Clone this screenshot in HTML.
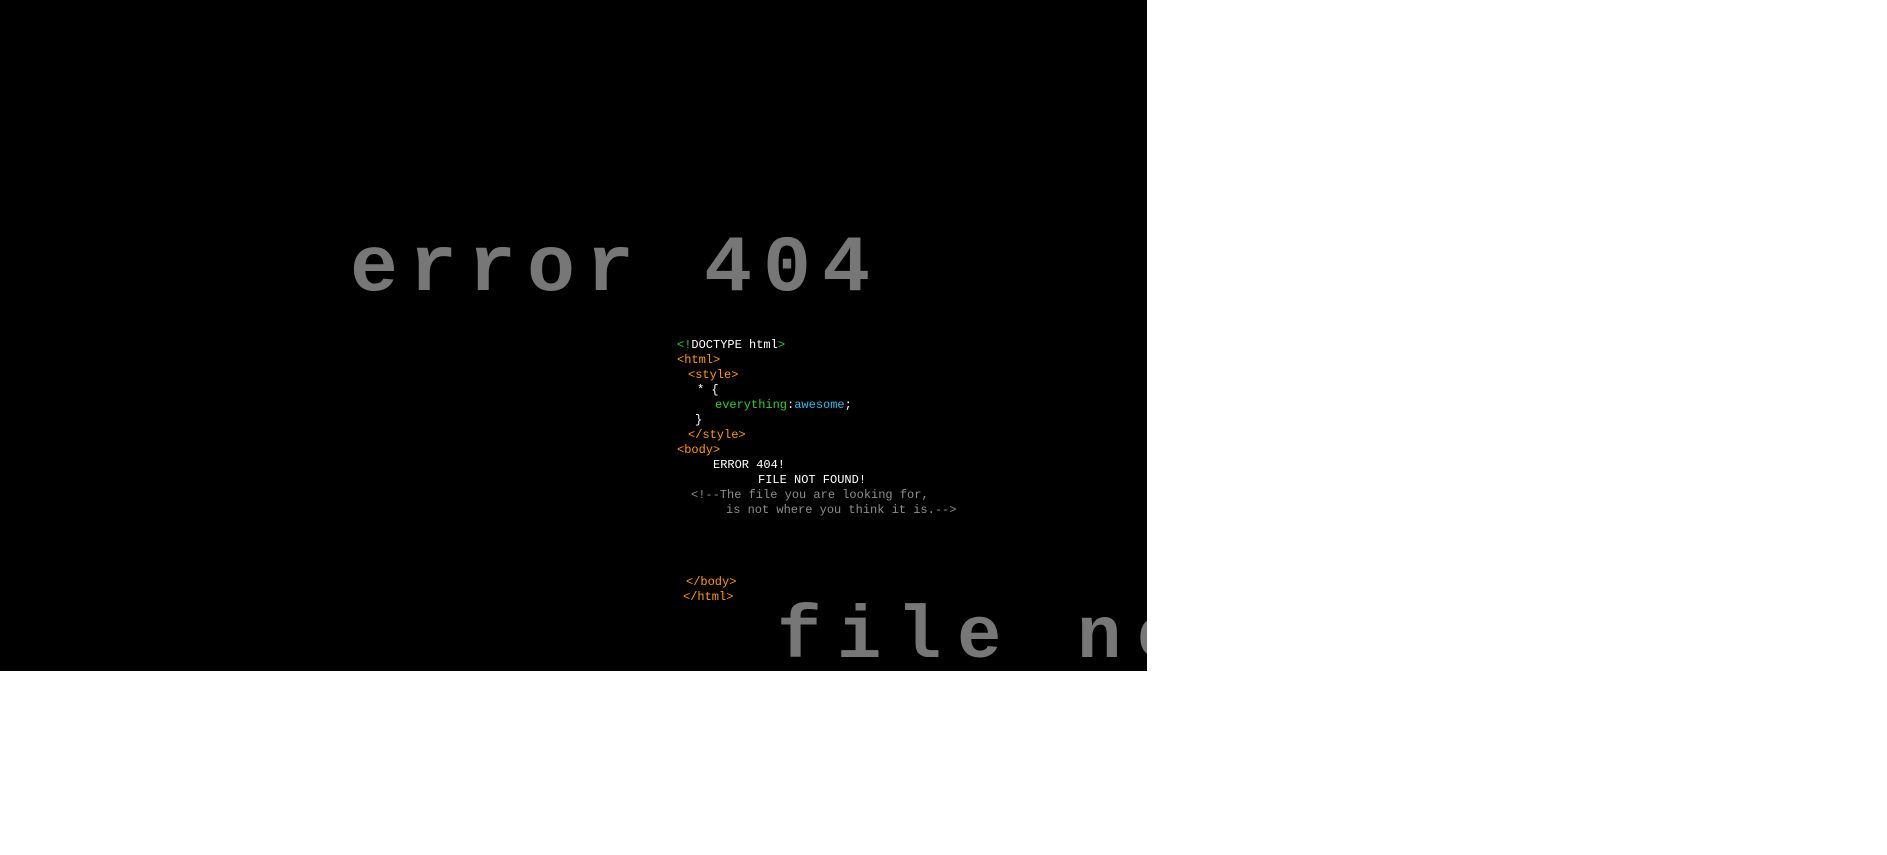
<!DOCTYPE html>
<html><head><style>
html,body{margin:0;padding:0;background:#fff;width:1887px;height:855px;overflow:hidden}
#bk{position:absolute;left:0;top:0;width:1147px;height:671px;background:#000;overflow:hidden}
.big{position:absolute;font-family:"Liberation Mono",monospace;font-weight:bold;color:#777;white-space:pre;line-height:1}
.c{position:absolute;font-family:"Liberation Mono",monospace;font-size:12px;line-height:15px;white-space:pre;color:#fff}
.g{color:#33cc33}.o{color:#ff9900}.b{color:#33bbee}.m{color:#8a8f8f}
</style></head><body>
<div id="bk">
<div class="big" style="left:350px;top:230px;font-size:80px;letter-spacing:11px;">error 404</div>
<div class="big" style="left:777px;top:601px;font-size:74px;letter-spacing:15.6px;">file not found</div>
<div class="c" style="left:677px;top:338px"><span class="g">&lt;!</span>DOCTYPE html<span class="g">&gt;</span></div>
<div class="c o" style="left:677px;top:353px">&lt;html&gt;</div>
<div class="c o" style="left:688px;top:368px">&lt;style&gt;</div>
<div class="c" style="left:697px;top:383px">* {</div>
<div class="c" style="left:715px;top:398px"><span class="g">everything</span>:<span class="b">awesome</span>;</div>
<div class="c" style="left:695px;top:413px">}</div>
<div class="c o" style="left:688px;top:428px">&lt;/style&gt;</div>
<div class="c o" style="left:677px;top:443px">&lt;body&gt;</div>
<div class="c" style="left:713px;top:458px">ERROR 404!</div>
<div class="c" style="left:758px;top:473px">FILE NOT FOUND!</div>
<div class="c m" style="left:691px;top:488px">&lt;!--The file you are looking for,</div>
<div class="c m" style="left:726px;top:503px">is not where you think it is.--&gt;</div>
<div class="c o" style="left:686px;top:575px">&lt;/body&gt;</div>
<div class="c o" style="left:683px;top:590px">&lt;/html&gt;</div>
</div>
</body></html>
